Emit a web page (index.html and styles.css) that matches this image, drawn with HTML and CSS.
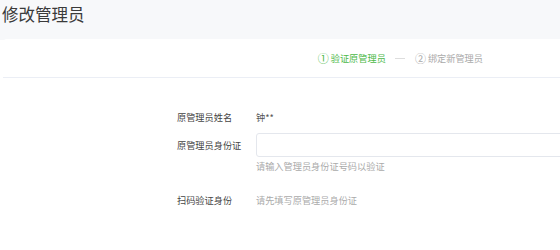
FILE: index.html
```html
<!DOCTYPE html>
<html lang="zh-CN">
<head>
    <meta charset="UTF-8">
    <meta name="viewport" content="width=device-width, initial-scale=1.0">
    <title>修改管理员</title>
    <link rel="stylesheet" href="styles.css">
</head>
<body>
    <div class="page-header">
        <h1>修改管理员</h1>
    </div>
    <div class="steps">
        <div class="step active"><span class="num">①</span>验证原管理员</div>
        <div class="step-line"></div>
        <div class="step"><span class="num">②</span>绑定新管理员</div>
    </div>
    <div class="form">
        <div class="row">
            <label>原管理员姓名</label>
            <span class="value">钟**</span>
        </div>
        <div class="row row-input">
            <label for="idCard">原管理员身份证</label>
            <input type="text" id="idCard">
        </div>
        <div class="hint">请输入管理员身份证号码以验证</div>
        <div class="row row-scan">
            <label>扫码验证身份</label>
            <span class="muted">请先填写原管理员身份证</span>
        </div>
    </div>
</body>
</html>
```

FILE: styles.css
```css
body {
    margin: 0;
    background: #fff;
    font-family: "Noto Sans CJK SC", "Noto Sans", sans-serif;
    color: #333;
    overflow: hidden;
}
.page-header {
    height: 40px;
    background: #f7f8fa;
    padding-left: 2px;
    box-sizing: border-box;
}
.page-header h1 {
    margin: 0;
    font-size: 16.5px;
    font-weight: normal;
    line-height: 28px;
    color: #3a3a3a;
}
.steps {
    height: 39px;
    margin-left: 3px;
    background: #fff;
    border-bottom: 1px solid #ebeef5;
    border-top-left-radius: 4px;
    box-sizing: border-box;
    display: flex;
    align-items: center;
    justify-content: flex-end;
    padding-right: 77px;
    margin-top: -1px;
    font-size: 9.2px;
}
.step {
    color: #aaa;
    display: flex;
    align-items: center;
}
.step .num {
    font-size: 11px;
    margin-right: 2px;
}
.step.active {
    color: #4cb948;
}
.step-line {
    width: 10px;
    height: 1px;
    background: #ddd;
    margin: 0 10px 0 9px;
}
.form {
    padding-top: 30px;
    padding-left: 177px;
    font-size: 9.2px;
}
.row {
    display: flex;
    align-items: center;
    line-height: 18px;
}
.row label {
    width: 79px;
    flex-shrink: 0;
    color: #444;
}
.value {
    color: #555;
}
.row-input {
    margin-top: 7px;
}
.row-input input {
    width: 320px;
    min-width: 320px;
    flex-shrink: 0;
    height: 24px;
    box-sizing: border-box;
    border: 1px solid #e4e7ed;
    border-radius: 3px;
    outline: none;
    padding: 0 8px;
}
.hint {
    margin-left: 79px;
    line-height: 14px;
    margin-top: 2px;
    color: #aaa;
}
.row-scan {
    margin-top: 18px;
}
.muted {
    color: #aaa;
}
```
